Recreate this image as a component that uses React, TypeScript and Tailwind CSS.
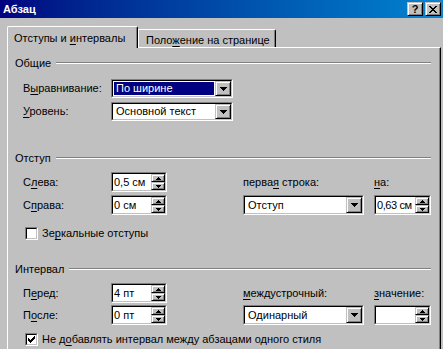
import React from "react";

const raised =
  "bg-[#c0c0c0] border border-t-[#c0c0c0] border-l-[#c0c0c0] border-b-black border-r-black shadow-[inset_1px_1px_0_#ffffff,inset_-1px_-1px_0_#808080]";

function DownTri() {
  return (
    <svg width="7" height="4" viewBox="0 0 7 4" shapeRendering="crispEdges">
      <rect x="0" y="0" width="7" height="1" fill="#000" />
      <rect x="1" y="1" width="5" height="1" fill="#000" />
      <rect x="2" y="2" width="3" height="1" fill="#000" />
      <rect x="3" y="3" width="1" height="1" fill="#000" />
    </svg>
  );
}

function SmallTri({ up }: { up: boolean }) {
  return (
    <svg width="5" height="3" viewBox="0 0 5 3" shapeRendering="crispEdges">
      {up ? (
        <>
          <rect x="2" y="0" width="1" height="1" fill="#000" />
          <rect x="1" y="1" width="3" height="1" fill="#000" />
          <rect x="0" y="2" width="5" height="1" fill="#000" />
        </>
      ) : (
        <>
          <rect x="0" y="0" width="5" height="1" fill="#000" />
          <rect x="1" y="1" width="3" height="1" fill="#000" />
          <rect x="2" y="2" width="1" height="1" fill="#000" />
        </>
      )}
    </svg>
  );
}

function Sunken({ className, children }: { className: string; children?: React.ReactNode }) {
  return (
    <div
      className={`border border-t-[#808080] border-l-[#808080] border-b-white border-r-white ${className}`}
    >
      <div className="h-full border border-t-black border-l-black border-b-[#c0c0c0] border-r-[#c0c0c0] bg-white flex items-stretch">
        {children}
      </div>
    </div>
  );
}

function Select({ className, value, hl }: { className: string; value: string; hl?: boolean }) {
  return (
    <Sunken className={className}>
      <div className="flex-1 flex items-center min-w-0 pl-[1px] pr-[1px] py-[1px]">
        <div
          className={`h-full flex-1 flex items-center pl-[2px] whitespace-nowrap ${
            hl ? "bg-[#000080] text-white" : ""
          }`}
        >
          <span>{value}</span>
        </div>
      </div>
      <div className={`w-[16px] flex items-center justify-center ${raised}`}>
        <DownTri />
      </div>
    </Sunken>
  );
}

function Spinner({ className, value, tight }: { className: string; value: string; tight?: boolean }) {
  return (
    <Sunken className={className}>
      <div className={`flex-1 flex items-center pl-[1px] whitespace-nowrap min-w-0 ${tight ? "tracking-[-0.4px]" : ""}`}>
        <span>{value}</span>
      </div>
      <div className="w-[14px] flex flex-col relative z-10">
        <div className={`flex-1 flex items-center justify-center ${raised}`}>
          <SmallTri up />
        </div>
        <div className={`flex-1 flex items-center justify-center ${raised}`}>
          <SmallTri up={false} />
        </div>
      </div>
    </Sunken>
  );
}

function Checkbox({ checked }: { checked?: boolean }) {
  return (
    <div className="w-[13px] h-[13px] border border-t-[#808080] border-l-[#808080] border-b-white border-r-white">
      <div className="w-full h-full border border-t-black border-l-black border-b-[#c0c0c0] border-r-[#c0c0c0] bg-white flex items-center justify-center">
        {checked && (
          <svg width="7" height="7" viewBox="0 0 7 7" shapeRendering="crispEdges">
            <rect x="0" y="2" width="1" height="3" fill="#000" />
            <rect x="1" y="3" width="1" height="3" fill="#000" />
            <rect x="2" y="4" width="1" height="3" fill="#000" />
            <rect x="3" y="3" width="1" height="3" fill="#000" />
            <rect x="4" y="2" width="1" height="3" fill="#000" />
            <rect x="5" y="1" width="1" height="3" fill="#000" />
            <rect x="6" y="0" width="1" height="3" fill="#000" />
          </svg>
        )}
      </div>
    </div>
  );
}

function GroupHeader({ title }: { title: string }) {
  return (
    <div className="h-[14px] flex items-center">
      <span className="leading-none">{title}</span>
      <div className="flex-1 ml-[5px] h-[2px] border-t border-t-[#808080] border-b border-b-white" />
    </div>
  );
}

function Lbl({ children }: { children: React.ReactNode }) {
  return (
    <div className="flex items-center whitespace-nowrap">
      <span>{children}</span>
    </div>
  );
}

const u = "underline underline-offset-[2px] decoration-[1px]";

export default function App() {
  return (
    <div className="w-[443px] h-[349px] bg-[#c0c0c0] overflow-hidden text-[11px] text-black font-['Liberation_Sans',Arial,sans-serif] leading-none">
      {/* title bar */}
      <div className="h-[18px] flex items-center pl-[3px] pr-[2px] bg-linear-to-r from-[#000080] to-[#1084d0]">
        <div className="flex-1 text-white font-bold text-[11px]">Абзац</div>
        <div className="flex gap-[2px]">
          <div className={`w-[16px] h-[14px] flex items-center justify-center font-bold text-[11px] ${raised}`}>
            ?
          </div>
          <div className={`w-[16px] h-[14px] flex items-center justify-center ${raised}`}>
            <svg width="8" height="7" viewBox="0 0 8 7" shapeRendering="crispEdges">
              <path d="M0 0h2v1h-2zM6 0h2v1h-2zM1 1h2v1h-2zM5 1h2v1h-2zM2 2h4v1h-4zM3 3h2v1h-2zM2 4h4v1h-4zM1 5h2v1h-2zM5 5h2v1h-2zM0 6h2v1h-2zM6 6h2v1h-2z" fill="#000" />
            </svg>
          </div>
        </div>
      </div>

      <div className="pt-[8px] pl-[7px] pr-[2px]">
        {/* tabs */}
        <div className="h-[22px] -mb-[1px] flex items-end relative z-10">
          <div className="w-[131px] h-[22px] bg-[#c0c0c0] border-l border-l-white border-t border-t-white border-r border-r-black shadow-[inset_-1px_0_0_#808080] rounded-tl-[2px] rounded-tr-[2px] pl-[6px] pt-[6px] whitespace-nowrap">
            <span>
              Отступы и <span className={u}>и</span>нтервалы
            </span>
          </div>
          <div className="w-[138px] h-[18px] mb-[1px] border-l border-l-white border-t border-t-white border-r border-r-black shadow-[inset_-1px_0_0_#808080] rounded-tr-[2px] pl-[7px] pt-[5px] whitespace-nowrap">
            <span>
              Поло<span className={u}>ж</span>ение на странице
            </span>
          </div>
        </div>

        {/* panel */}
        <div className="h-[400px] border-l border-l-white border-t border-t-white border-r border-r-black shadow-[inset_-1px_0_0_#808080] pl-[7px] pr-[9px] pt-[8px]">
          {/* Общие */}
          <GroupHeader title="Общие" />
          <div className="mt-[9px] pl-[8px] grid grid-cols-[88px_122px] grid-rows-[19px_19px] gap-y-[4px]">
            <Lbl>
              В<span className={u}>ы</span>равнивание:
            </Lbl>
            <Select className="w-[122px] h-[19px]" value="По ширине" hl />
            <Lbl>
              <span className={u}>У</span>ровень:
            </Lbl>
            <Select className="w-[122px] h-[19px]" value="Основной текст" />
          </div>

          {/* Отступ */}
          <div className="mt-[30px]">
            <GroupHeader title="Отступ" />
          </div>
          <div className="mt-[7px] pl-[8px] grid grid-cols-[88px_132px_131px_57px] grid-rows-[20px_20px] gap-y-[3px]">
            <Lbl>
              С<span className={u}>л</span>ева:
            </Lbl>
            <Spinner className="w-[56px] h-[20px]" value="0,5 см" />
            <Lbl>
              перва<span className={u}>я</span> строка:
            </Lbl>
            <Lbl>
              <span className={u}>н</span>а:
            </Lbl>
            <Lbl>
              С<span className={u}>п</span>рава:
            </Lbl>
            <Spinner className="w-[56px] h-[20px]" value="0 см" />
            <Select className="w-[121px] h-[20px]" value="Отступ" />
            <Spinner className="w-[57px] h-[20px]" value="0,63 см" tight />
          </div>
          <div className="mt-[12px] pl-[10px] flex items-center h-[13px]">
            <Checkbox />
            <span className="ml-[4px] whitespace-nowrap">
              Зе<span className={u}>р</span>кальные отступы
            </span>
          </div>

          {/* Интервал */}
          <div className="mt-[22px]">
            <GroupHeader title="Интервал" />
          </div>
          <div className="mt-[7px] pl-[8px] grid grid-cols-[88px_132px_131px_57px] grid-rows-[20px_20px] gap-y-[2px]">
            <Lbl>
              П<span className={u}>е</span>ред:
            </Lbl>
            <Spinner className="w-[56px] h-[20px]" value="4 пт" />
            <Lbl>
              <span className={u}>м</span>еждустрочный:
            </Lbl>
            <Lbl>
              <span className={u}>з</span>начение:
            </Lbl>
            <Lbl>
              П<span className={u}>о</span>сле:
            </Lbl>
            <Spinner className="w-[56px] h-[20px]" value="0 пт" />
            <Select className="w-[121px] h-[20px]" value="Одинарный" />
            <Spinner className="w-[57px] h-[20px]" value="" />
          </div>
          <div className="mt-[8px] pl-[10px] flex items-center h-[13px]">
            <Checkbox checked />
            <span className="ml-[4px] whitespace-nowrap">
              Не д<span className={u}>о</span>бавлять интервал между абзацами одного стиля
            </span>
          </div>
        </div>
      </div>
    </div>
  );
}
